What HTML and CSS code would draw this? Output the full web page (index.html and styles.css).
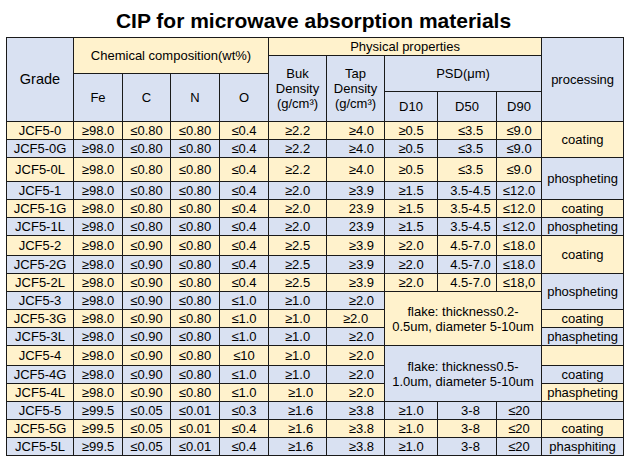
FILE: index.html
```html
<!DOCTYPE html>
<html>
<head>
<meta charset="utf-8">
<link rel="stylesheet" href="styles.css">
</head>
<body>
<h1 class="title">CIP for microwave absorption materials</h1>
<table class="spec">
  <colgroup>
    <col class="c-grade"><col class="c-fe"><col class="c-c"><col class="c-n"><col class="c-o">
    <col class="c-buk"><col class="c-tap"><col class="c-d10"><col class="c-d50"><col class="c-d90"><col class="c-proc">
  </colgroup>
  <thead>
    <tr class="h1">
      <th rowspan="4" class="b grade-h">Grade</th>
      <th colspan="4" rowspan="2" class="y">Chemical composition(wt%)</th>
      <th colspan="5" class="y">Physical properties</th>
      <th rowspan="4" class="b">processing</th>
    </tr>
    <tr class="h2">
      <th rowspan="3" class="b multi">Buk<br>Density<br>(g/cm³)</th>
      <th rowspan="3" class="b multi">Tap<br>Density<br>(g/cm³)</th>
      <th colspan="3" rowspan="2" class="b">PSD(μm)</th>
    </tr>
    <tr class="h3">
      <th rowspan="2" class="b">Fe</th>
      <th rowspan="2" class="b">C</th>
      <th rowspan="2" class="b">N</th>
      <th rowspan="2" class="b">O</th>
    </tr>
    <tr class="h4">
      <th class="b">D10</th>
      <th class="b d50h">D50</th>
      <th class="b">D90</th>
    </tr>
  </thead>
  <tbody>
    <tr class="y"><td>JCF5-0</td><td>≥98.0</td><td>≤0.80</td><td>≤0.80</td><td>≤0.4</td><td>≥2.2</td><td class="tap">≥4.0</td><td>≥0.5</td><td class="d50">≤3.5</td><td>≤9.0</td><td rowspan="2" class="y">coating</td></tr>
    <tr class="b"><td>JCF5-0G</td><td>≥98.0</td><td>≤0.80</td><td>≤0.80</td><td>≤0.4</td><td>≥2.2</td><td class="tap">≥4.0</td><td>≥0.5</td><td class="d50">≤3.5</td><td>≤9.0</td></tr>
    <tr class="y tall"><td>JCF5-0L</td><td>≥98.0</td><td>≤0.80</td><td>≤0.80</td><td>≤0.4</td><td>≥2.2</td><td class="tap">≥4.0</td><td>≥0.5</td><td class="d50">≤3.5</td><td>≤9.0</td><td rowspan="2" class="b">phospheting</td></tr>
    <tr class="b"><td>JCF5-1</td><td>≥98.0</td><td>≤0.80</td><td>≤0.80</td><td>≤0.4</td><td>≥2.0</td><td class="tap">≥3.9</td><td>≥1.5</td><td class="d50">3.5-4.5</td><td>≤12.0</td></tr>
    <tr class="y"><td>JCF5-1G</td><td>≥98.0</td><td>≤0.80</td><td>≤0.80</td><td>≤0.4</td><td>≥2.0</td><td class="tap">23.9</td><td>≥1.5</td><td class="d50">3.5-4.5</td><td>≤12.0</td><td>coating</td></tr>
    <tr class="b"><td>JCF5-1L</td><td>≥98.0</td><td>≤0.80</td><td>≤0.80</td><td>≤0.4</td><td>≥2.0</td><td class="tap">23.9</td><td>≥1.5</td><td class="d50">3.5-4.5</td><td>≤12.0</td><td>phospheting</td></tr>
    <tr class="y r20"><td>JCF5-2</td><td>≥98.0</td><td>≤0.90</td><td>≤0.80</td><td>≤0.4</td><td>≥2.5</td><td class="tap">≥3.9</td><td>≥2.0</td><td class="d50">4.5-7.0</td><td>≤18.0</td><td rowspan="2" class="y">coating</td></tr>
    <tr class="b"><td>JCF5-2G</td><td>≥98.0</td><td>≤0.90</td><td>≤0.80</td><td>≤0.4</td><td>≥2.5</td><td class="tap">≥3.9</td><td>≥2.0</td><td class="d50">4.5-7.0</td><td>≤18.0</td></tr>
    <tr class="y"><td>JCF5-2L</td><td>≥98.0</td><td>≤0.90</td><td>≤0.80</td><td>≤0.4</td><td>≥2.5</td><td class="tap">≥3.9</td><td>≥2.0</td><td class="d50">4.5-7.0</td><td>≤18,0</td><td rowspan="2" class="b">phospheting</td></tr>
    <tr class="b"><td>JCF5-3</td><td>≥98.0</td><td>≤0.90</td><td>≤0.80</td><td>≤1.0</td><td>≥1.0</td><td class="tap">≥2.0</td><td colspan="3" rowspan="3" class="y flake">flake: thickness0.2-<br>0.5um, diameter 5-10um</td></tr>
    <tr class="y"><td>JCF5-3G</td><td>≥98.0</td><td>≤0.90</td><td>≤0.80</td><td>≤1.0</td><td>≥1.0</td><td>≥2.0</td><td>coating</td></tr>
    <tr class="b"><td>JCF5-3L</td><td>≥98.0</td><td>≤0.90</td><td>≤0.80</td><td>≤1.0</td><td>≥1.0</td><td class="tap">≥2.0</td><td>phaspheting</td></tr>
    <tr class="y r20"><td>JCF5-4</td><td>≥98.0</td><td>≤0.90</td><td>≤0.80</td><td>≤10</td><td>≥1.0</td><td class="tap">≥2.0</td><td colspan="3" rowspan="3" class="b flake">flake: thickness0.5-<br>1.0um, diameter 5-10um</td><td></td></tr>
    <tr class="b"><td>JCF5-4G</td><td>≥98.0</td><td>≤0.90</td><td>≤0.80</td><td>≤1.0</td><td>≥1.0</td><td class="tap">≥2.0</td><td>coating</td></tr>
    <tr class="y"><td>JCF5-4L</td><td>≥98.0</td><td>≤0.90</td><td>≤0.80</td><td>≤1.0</td><td class="shift">≥1.0</td><td class="tap">≥2.0</td><td>phaspheting</td></tr>
    <tr class="b"><td>JCF5-5</td><td>≥99.5</td><td>≤0.05</td><td>≤0.01</td><td>≤0.3</td><td class="shift">≥1.6</td><td class="tap">≥3.8</td><td>≥1.0</td><td class="d50">3-8</td><td>≤20</td><td></td></tr>
    <tr class="y"><td>JCF5-5G</td><td>≥99.5</td><td>≤0.05</td><td>≤0.01</td><td>≤0.4</td><td class="shift">≥1.6</td><td class="tap">≥3.8</td><td>≥1.0</td><td class="d50">3-8</td><td>≤20</td><td>coating</td></tr>
    <tr class="b"><td>JCF5-5L</td><td>≥99.5</td><td>≤0.05</td><td>≤0.01</td><td>≤0.4</td><td class="shift">≥1.6</td><td class="tap">≥3.8</td><td>≥1.0</td><td class="d50">3-8</td><td>≤20</td><td>phasphiting</td></tr>
  </tbody>
</table>
</body>
</html>
```

FILE: styles.css
```css
html, body {
  margin: 0;
  padding: 0;
  background: #ffffff;
}
body {
  font-family: "Liberation Sans", Arial, sans-serif;
  color: #000;
}
.title {
  margin: 9px 0 0 0;
  font-size: 21px;
  line-height: 24px;
  font-weight: bold;
  text-align: center;
}
.spec {
  margin: 4px 0 0 6px;
  border-collapse: collapse;
  table-layout: fixed;
  width: 617px;
  font-size: 13px;
}
.c-grade { width: 67px; }
.c-fe { width: 49px; }
.c-c { width: 48px; }
.c-n { width: 49px; }
.c-o { width: 49px; }
.c-buk { width: 58px; }
.c-tap { width: 58px; }
.c-d10 { width: 53px; }
.c-d50 { width: 59px; }
.c-d90 { width: 45px; }
.c-proc { width: 82px; }

.spec th, .spec td {
  border: 1px solid #1a1a1a;
  padding: 0 2px;
  text-align: center;
  vertical-align: middle;
  font-weight: normal;
  white-space: nowrap;
  line-height: 15px;
}
.spec .y { background: #fff2cc; }
.spec .b { background: #d9e1f2; }
.spec tr.y > td { background: #fff2cc; }
.spec tr.b > td { background: #d9e1f2; }
.spec tr > td.y { background: #fff2cc; }
.spec tr > td.b { background: #d9e1f2; }

.h1, .h2, .h3 { height: 18px; }
.h4 { height: 30px; }
.spec tbody tr { height: 18px; }
.spec tbody tr.tall { height: 24px; }
.spec tbody tr.r20 { height: 20px; }

.grade-h { font-size: 14.5px; }
.multi { line-height: 17px; }
.spec td.tap { text-align: right; padding-right: 10px; }
.spec td.d50 { padding-left: 9px; }
.spec td.shift { padding-left: 8px; }
.spec td.flake { line-height: 15px; padding-top: 1px; }
```
